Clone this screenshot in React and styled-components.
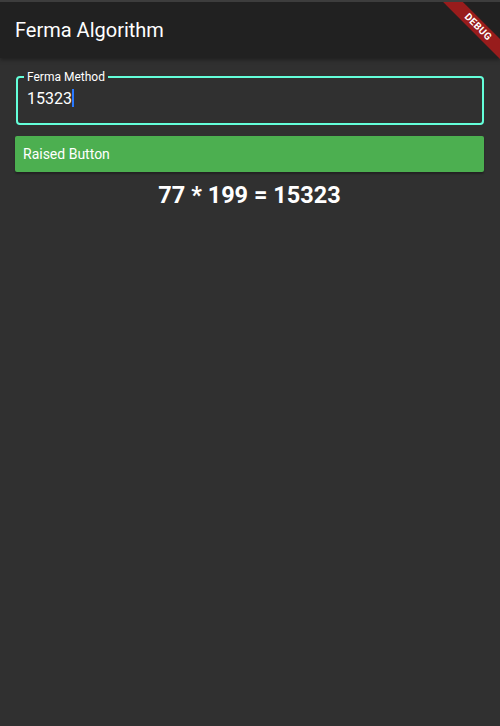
import styled, { createGlobalStyle } from "styled-components";

const GlobalStyle = createGlobalStyle`
  html, body {
    margin: 0;
    padding: 0;
    background: #303030;
    font-family: Roboto, "Liberation Sans", sans-serif;
  }
`;

const Screen = styled.div`
  position: relative;
  width: 500px;
  height: 726px;
  overflow: hidden;
  background: #303030;
  border-top: 2px solid #3d3d3d;
  box-sizing: border-box;
`;

const AppBar = styled.header`
  height: 56px;
  background: #212121;
  display: flex;
  align-items: center;
  padding: 0 15px;
  box-shadow: 0 2px 4px rgba(0, 0, 0, 0.35);
  position: relative;
  z-index: 1;
`;

const Title = styled.h1`
  margin: 0;
  color: #fff;
  font-size: 20px;
  font-weight: 400;
`;

const Body = styled.main`
  display: flex;
  flex-direction: column;
  padding: 14px 16px 0 15px;
`;

const Field = styled.fieldset`
  margin: 0 0 0 1px;
  padding: 0 6px 14px;
  border: 2px solid #64ffda;
  border-radius: 4px;
  min-height: 0;
  height: 53px;
  box-sizing: border-box;
`;

const Legend = styled.legend`
  padding: 0 3px;
  color: #fff;
  font-size: 12px;
  line-height: 10px;
`;

const Caret = styled.span`
  display: inline-block;
  width: 2px;
  height: 18px;
  background: #2979ff;
  vertical-align: -3px;
`;

const ValueRow = styled.div`
  margin-top: 7px;
  padding-left: 3px;
  color: #fff;
  font-size: 16px;
  line-height: 20px;
`;

const RaisedButton = styled.button`
  margin-top: 11px;
  height: 36px;
  background: #4caf50;
  border: none;
  border-radius: 2px;
  color: #fff;
  font: 14px Roboto, "Liberation Sans", sans-serif;
  text-align: left;
  padding: 0 8px;
  box-shadow: 0 2px 2px rgba(0, 0, 0, 0.3);
`;

const Result = styled.p`
  margin: 9px 0 0;
  text-align: center;
  color: #fff;
  font-size: 23.5px;
  font-weight: 700;
`;

const Banner = styled.div`
  position: absolute;
  top: 18px;
  right: -28px;
  width: 100px;
  height: 14px;
  background: rgba(183, 28, 28, 0.8);
  transform: rotate(45deg);
  color: #fff;
  font-size: 10px;
  font-weight: 700;
  line-height: 14px;
  text-align: center;
  letter-spacing: 0.3px;
  z-index: 2;
`;

export default function App() {
  return (
    <>
      <GlobalStyle />
      <Screen>
        <AppBar>
          <Title>Ferma Algorithm</Title>
        </AppBar>
        <Banner>DEBUG</Banner>
        <Body>
          <Field>
            <Legend>Ferma Method</Legend>
            <ValueRow>
              15323
              <Caret />
            </ValueRow>
          </Field>
          <RaisedButton>Raised Button</RaisedButton>
          <Result>77 * 199 = 15323</Result>
        </Body>
      </Screen>
    </>
  );
}
